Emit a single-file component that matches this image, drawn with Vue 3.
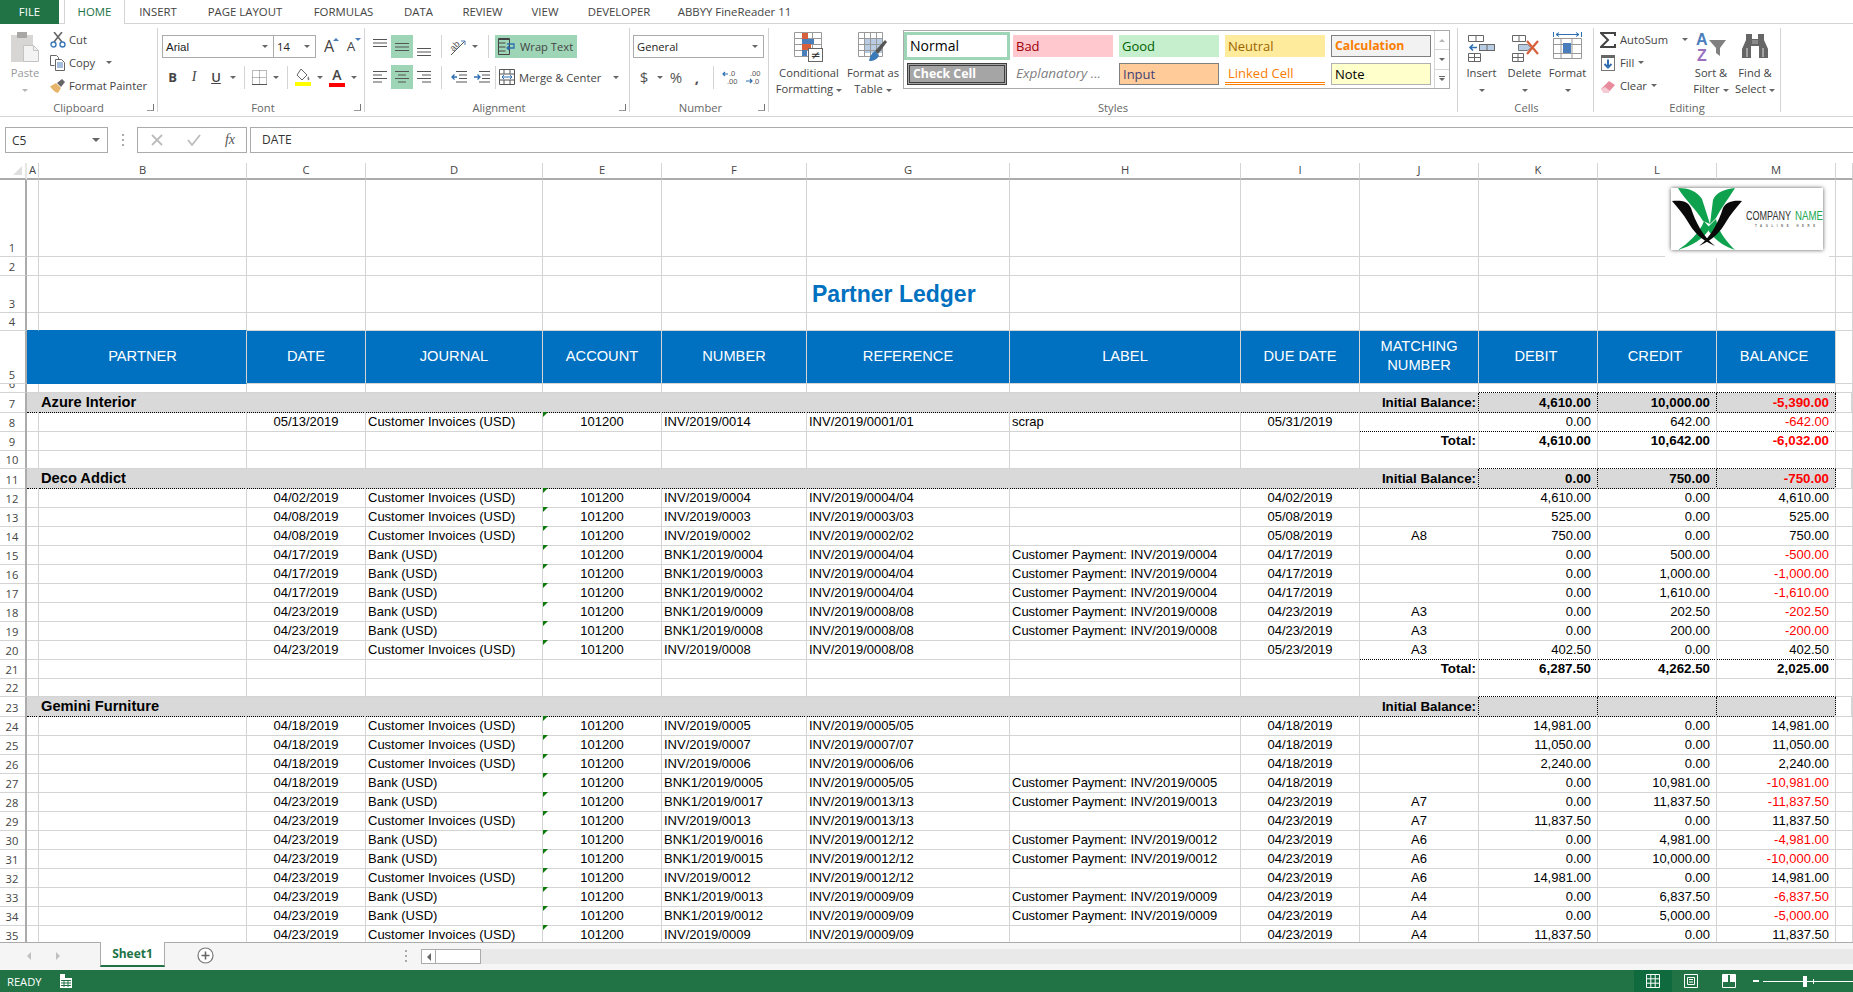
<template>
  <div class="excel">
    <!-- tabs -->
    <div class="tabs">
      <div class="file">FILE</div>
      <div class="home">HOME</div>
      <div v-for="t in tabs" :key="t.name" class="tab" :style="{ width: t.w + 'px' }">{{ t.name }}</div>
    </div>

    <!-- ribbon -->
    <div class="ribbon">
      <div class="group g-clip">
        <div class="body">
          <div class="big paste">
            <svg width="30" height="30" viewBox="0 0 30 30"><rect x="0" y="3" width="22" height="27" fill="#d8d5d5"/><rect x="6" y="0" width="10" height="6" fill="#a9a6a6"/><path d="M12.500 13.500h10l5 5v11h-15z" fill="#f4f3f3" stroke="#c5c2c2"/><path d="M22.500 13.500v5h5" fill="none" stroke="#c5c2c2"/></svg>
            <span class="gray">Paste</span>
            <i class="caret light"></i>
          </div>
          <div class="small">
            <div class="item">
              <svg width="16" height="16" viewBox="0 0 16 16"><path d="M4 10L12 0M12 10L4 0" stroke="#666" stroke-width="1.600"/><circle cx="3.500" cy="12.500" r="2.500" fill="none" stroke="#3b7ab9" stroke-width="1.400"/><circle cx="12.500" cy="12.500" r="2.500" fill="none" stroke="#3b7ab9" stroke-width="1.400"/></svg>
              <span>Cut</span>
            </div>
            <div class="item">
              <svg width="16" height="16" viewBox="0 0 16 16"><path d="M.5.500h6l2 2v2M.5.500v10h4" fill="none" stroke="#666"/><path d="M5.500 4.500h6l3 3v8h-9z" fill="#fff" stroke="#666"/><path d="M7 8h6M7 10h6M7 12h6" stroke="#4a7ebb"/></svg>
              <span>Copy</span><i class="caret copy-caret"></i>
            </div>
            <div class="item">
              <svg width="16" height="16" viewBox="0 0 16 16"><path d="M0 8.500L6 5l5 5-3 5c-3-.5-5-3-8-6.500z" fill="#e6b56b"/><path d="M7 5l5-4 3 3-4 5z" fill="#666"/></svg>
              <span>Format Painter</span>
            </div>
          </div>
        </div>
        <div class="label">Clipboard<i class="launch"></i></div>
      </div>

      <div class="group g-font">
        <div class="body col">
          <div class="line1">
            <div class="select font-name"><span class="arial">Arial</span><i class="caret"></i></div>
            <div class="select font-size"><span>14</span><i class="caret"></i></div>
            <span class="grow">A<i class="up"></i></span>
            <span class="shrink">A<i class="down"></i></span>
          </div>
          <div class="line2">
            <span class="t w21 fb">B</span>
            <span class="t w22 fi">I</span>
            <span class="t w22 fu">U</span>
            <span class="t w12"><i class="caret"></i></span>
            <span class="t w10"><i class="sep"></i></span>
            <span class="t w21">
              <svg width="15" height="15" viewBox="0 0 15 15"><path d="M.5.500h14v14H.5zM7.500.500v14M.5 7.500h14" fill="none" stroke="#777" stroke-dasharray="1 1"/><path d="M0 14.500h15" stroke="#555"/></svg>
            </span>
            <span class="t w12"><i class="caret"></i></span>
            <span class="t w10"><i class="sep"></i></span>
            <span class="t w22">
              <svg width="18" height="18" viewBox="0 0 18 18"><path d="M7 1l6 6-5 5-5-5z" fill="#fff" stroke="#666"/><path d="M14 8c1 2 2 3 1 4s-2-1-1-4z" fill="#777"/><rect x="1" y="14" width="16" height="4" fill="#ffff00"/></svg>
            </span>
            <span class="t w12"><i class="caret"></i></span>
            <span class="t w22 fcolor">A</span>
            <span class="t w12"><i class="caret"></i></span>
          </div>
        </div>
        <div class="label">Font<i class="launch"></i></div>
      </div>

      <div class="group g-align">
        <div class="body col">
          <div class="line1">
            <span class="t w22">
              <svg width="14" height="18" viewBox="0 0 14 18"><path d="M0 1.500h14M0 5h14M0 8.500h14" stroke="#555"/></svg>
            </span>
            <span class="t w22 on">
              <svg width="14" height="18" viewBox="0 0 14 18"><path d="M0 5.500h14M0 9h14M0 12.500h14" stroke="#555"/></svg>
            </span>
            <span class="t w22">
              <svg width="14" height="18" viewBox="0 0 14 18"><path d="M0 10.500h14M0 14h14M0 17.500h14" stroke="#555"/></svg>
            </span>
            <span class="t w8"><i class="sep"></i></span>
            <span class="t w22">
              <svg width="18" height="18" viewBox="0 0 18 18"><text x="1" y="10" transform="rotate(-45 7 8)" font-size="9" font-family="Liberation Sans, sans-serif" fill="#555">ab</text><path d="M2 17L16 3" stroke="#555"/><path d="M12 3h4v4" fill="none" stroke="#4a7ebb"/></svg>
            </span>
            <span class="t w12"><i class="caret"></i></span>
            <span class="t w14"><i class="sep"></i></span>
            <div class="wrap">
              <svg width="18" height="18" viewBox="0 0 18 18"><path d="M.5 1.500h11M.5 5h7M.5 9h7M.5 13h7" stroke="#444"/><path d="M.5.500h11v16H.5z" fill="none" stroke="#444"/><path d="M9 6h7v4h-7M11 8l-2 2 2 2" fill="none" stroke="#2f6fb0" stroke-width="1.300"/></svg>
              <span>Wrap Text</span>
            </div>
          </div>
          <div class="line2">
            <span class="t w22">
              <svg width="14" height="14" viewBox="0 0 14 14"><path d="M0 1.500h14M0 5h9M0 8.500h14M0 12h9" stroke="#555"/></svg>
            </span>
            <span class="t w22 on">
              <svg width="14" height="14" viewBox="0 0 14 14"><path d="M0 1.500h14M3 5h8M0 8.500h14M3 12h8" stroke="#555"/></svg>
            </span>
            <span class="t w22">
              <svg width="14" height="14" viewBox="0 0 14 14"><path d="M0 1.500h14M5 5h9M0 8.500h14M5 12h9" stroke="#555"/></svg>
            </span>
            <span class="t w8"><i class="sep"></i></span>
            <span class="t w23">
              <svg width="16" height="14" viewBox="0 0 16 14"><path d="M5 1.500h11M8 5h8M8 8.500h8M5 12h11" stroke="#555"/><path d="M6 7H1M3.500 4.500L1 7l2.500 2.500" fill="none" stroke="#2f6fb0" stroke-width="1.300"/></svg>
            </span>
            <span class="t w23">
              <svg width="16" height="14" viewBox="0 0 16 14"><path d="M5 1.500h11M8 5h8M8 8.500h8M5 12h11" stroke="#555"/><path d="M0 7h6M3.500 4.500L6 7 3.500 9.500" fill="none" stroke="#2f6fb0" stroke-width="1.300"/></svg>
            </span>
            <span class="t w4"><i class="sep"></i></span>
            <div class="merge">
              <svg width="16" height="16" viewBox="0 0 16 16"><path d="M.5.500h15v15H.5zM.5 5h15M.5 11h15M5 .5V5M11 .5V5M5 11v4.500M11 11v4.500" fill="none" stroke="#555"/><path d="M3 8h10M5 6l-2 2 2 2M11 6l2 2-2 2" fill="none" stroke="#2f6fb0"/></svg>
              <span>Merge &amp; Center</span>
              <i class="caret"></i>
            </div>
          </div>
        </div>
        <div class="label">Alignment<i class="launch"></i></div>
      </div>

      <div class="group g-num">
        <div class="body col">
          <div class="line1">
            <div class="select num-fmt"><span>General</span><i class="caret"></i></div>
          </div>
          <div class="line2 numline">
            <span class="t w22 sym">$</span>
            <span class="t w10"><i class="caret"></i></span>
            <span class="t w22 sym">%</span>
            <span class="t w20 sym comma">,</span>
            <span class="t w12"><i class="sep"></i></span>
            <span class="t w23">
              <svg width="18" height="16" viewBox="0 0 18 16"><text x="7" y="7" font-size="7.500" font-family="Liberation Sans, sans-serif" fill="#555">.0</text><text x="5" y="15" font-size="7.500" font-family="Liberation Sans, sans-serif" fill="#555">.00</text><path d="M6 5H1M3 3L1 5l2 2" fill="none" stroke="#2f6fb0" stroke-width="1.200"/></svg>
            </span>
            <span class="t w23">
              <svg width="18" height="16" viewBox="0 0 18 16"><text x="5" y="7" font-size="7.500" font-family="Liberation Sans, sans-serif" fill="#555">.00</text><text x="8" y="15" font-size="7.500" font-family="Liberation Sans, sans-serif" fill="#555">.0</text><path d="M1 12h6M5 10l2 2-2 2" fill="none" stroke="#2f6fb0" stroke-width="1.200"/></svg>
            </span>
          </div>
        </div>
        <div class="label">Number<i class="launch"></i></div>
      </div>

      <div class="group g-styles">
        <div class="body">
          <div class="big cond">
            <svg width="30" height="30" viewBox="0 0 30 30"><path d="M.5.500h27v24H.5zM9.500.5v24M18.500.5v24M.5 6.500h27M.5 12.500h27M.5 18.500h27" fill="#fff" stroke="#999"/><rect x="8" y="1" width="6" height="6" fill="#d6603c"/><rect x="8" y="7" width="12" height="5" fill="#4a7ebb"/><rect x="8" y="12" width="9" height="6" fill="#d6603c"/><rect x="8" y="18" width="5" height="6" fill="#4a7ebb"/><rect x="14.500" y="16.500" width="14" height="13" fill="#fff" stroke="#666"/><text x="21.500" y="27" text-anchor="middle" font-size="12" font-family="DejaVu Sans, sans-serif" fill="#333">≠</text></svg>
            <span>Conditional</span>
            <span>Formatting<i class="caret inl"></i></span>
          </div>
          <div class="big table">
            <svg width="30" height="30" viewBox="0 0 30 30"><rect x="1" y="1" width="24" height="24" fill="#fff"/><rect x="7" y="6" width="18" height="15" fill="#b8cce4"/><path d="M.5.500h24v24H.5zM6.500.5v24M12.500.5v24M18.500.5v24M.5 6.500h24M.5 12.500h24M.5 18.500h24" fill="none" stroke="#999"/><path d="M17 19L27 8l2 2-9 12z" fill="#555"/><path d="M11 29c1-6 4-9 6-10l4 4c-1 4-5 6-10 6z" fill="#3b7ab9"/></svg>
            <span>Format as</span>
            <span>Table<i class="caret inl"></i></span>
          </div>
          <div class="gallery">
            <div class="gal-grid">
              <div class="st s-normal">Normal</div>
              <div class="st s-bad">Bad</div>
              <div class="st s-good">Good</div>
              <div class="st s-neutral">Neutral</div>
              <div class="st s-calc">Calculation</div>
              <div class="st s-check">Check Cell</div>
              <div class="st s-expl">Explanatory ...</div>
              <div class="st s-input">Input</div>
              <div class="st s-linked">Linked Cell</div>
              <div class="st s-note">Note</div>
            </div>
            <div class="gal-scroll">
              <div class="gs"><i class="caret flip light"></i></div>
              <div class="gs"><i class="caret"></i></div>
              <div class="gs more"><i class="bar"></i><i class="caret"></i></div>
            </div>
          </div>
        </div>
        <div class="label">Styles</div>
      </div>

      <div class="group g-cells">
        <div class="body">
          <div class="big cellbtn">
            <svg width="27" height="30" viewBox="0 0 27 30"><path d="M.5 3.500h15v6H.5zM8 3.500v6M.5 21.500h12v8H.5zM.5 25.500h12M6.500 21.500v8" fill="none" stroke="#666"/><rect x="11.500" y="12.500" width="15" height="6" fill="#b8cce4" stroke="#666"/><path d="M19 12.500v6" stroke="#666"/><path d="M9 15.500H2M5 12.500l-3 3 3 3" fill="none" stroke="#2f6fb0" stroke-width="1.600"/></svg>
            <span>Insert</span>
            <i class="caret low"></i>
          </div>
          <div class="big cellbtn">
            <svg width="30" height="30" viewBox="0 0 30 30"><path d="M2.500 3.500h13v6h-13zM9 3.500v6M2.500 21.500h11v8h-11zM2.500 25.500h11M8 21.500v8" fill="none" stroke="#666"/><path d="M8.500 12.500h9l4 3-4 3h-9z" fill="#b8cce4" stroke="#777"/><path d="M17 9l11 13M28 9L17 22" stroke="#d6603c" stroke-width="2.200"/></svg>
            <span>Delete</span>
            <i class="caret low"></i>
          </div>
          <div class="big cellbtn">
            <svg width="29" height="30" viewBox="0 0 29 30"><path d="M.5 0v5M28.500 0v5M3 2.500h23M6 .5L3 2.500l3 2M23 .5l3 2-3 2" fill="none" stroke="#2f6fb0"/><path d="M.5 6.500h28v20H.5zM8 6.500v20M19 6.500v20M.5 12.500h28M.5 21.500h28" fill="#fff" stroke="#999"/><rect x="10" y="11" width="8" height="10" fill="#4a7ebb"/></svg>
            <span>Format</span>
            <i class="caret low"></i>
          </div>
        </div>
        <div class="label">Cells</div>
      </div>

      <div class="group g-edit">
        <div class="body">
          <div class="small edit-small">
            <div class="item">
              <svg width="16" height="16" viewBox="0 0 16 16"><path d="M15 4V1H1l7 7-7 7h14v-3" fill="none" stroke="#444" stroke-width="2"/></svg>
              <span>AutoSum</span><i class="caret sum-caret"></i>
            </div>
            <div class="item">
              <svg width="16" height="16" viewBox="0 0 16 16"><rect x="1.500" y=".5" width="13" height="15" fill="#fff" stroke="#777"/><rect x="1" y="0" width="14" height="3" fill="#666"/><path d="M8 4.500v8M4.500 9L8 12.500 11.500 9" fill="none" stroke="#2f6fb0" stroke-width="2"/></svg>
              <span>Fill</span><i class="caret fill-caret"></i>
            </div>
            <div class="item">
              <svg width="16" height="16" viewBox="0 0 16 16"><path d="M1 11l8-8 6 4-7 8H4z" fill="#e78b9d"/><path d="M1 11l3 4h4l2-2-5-4z" fill="#f6ccd4"/></svg>
              <span>Clear</span><i class="caret fill-caret"></i>
            </div>
          </div>
          <div class="big editbtn">
            <svg width="30" height="30" viewBox="0 0 30 30"><text x="0" y="13" font-size="16" font-weight="700" font-family="Liberation Sans, sans-serif" fill="#4a7ebb">A</text><text x="1" y="29" font-size="16" font-weight="700" font-family="Liberation Sans, sans-serif" fill="#9b6fc0">Z</text><path d="M13 8h17l-6 8v8l-4-3v-5z" fill="#808080"/></svg>
            <span>Sort &amp;</span>
            <span>Filter<i class="caret inl"></i></span>
          </div>
          <div class="big editbtn">
            <svg width="28" height="30" viewBox="0 0 28 30"><path d="M5 2h6v5h6V2h6v6l4 9v9H18V14h-8v12H1v-9l4-9z" fill="#666"/><path d="M11 8h6v4h-6z" fill="#8a8a8a"/><path d="M6 16v9M22 16v9" stroke="#fff" stroke-width=".8"/></svg>
            <span>Find &amp;</span>
            <span>Select<i class="caret inl"></i></span>
          </div>
        </div>
        <div class="label">Editing</div>
      </div>
    </div>

    <!-- formula bar -->
    <div class="fbar">
      <div class="namebox"><span>C5</span><i class="caret big-caret"></i></div>
      <div class="dots"><i></i><i></i><i></i></div>
      <div class="fbtns">
        <svg width="12" height="12" viewBox="0 0 12 12"><path d="M1 1l10 10M11 1L1 11" stroke="#bcbcbc" stroke-width="1.800"/></svg>
        <svg width="14" height="12" viewBox="0 0 14 12"><path d="M1 6l4 5 8-10" fill="none" stroke="#bcbcbc" stroke-width="1.800"/></svg>
        <span class="fx">fx</span>
      </div>
      <div class="finput">DATE</div>
    </div>

    <!-- sheet -->
    <div class="sheet">
      <div class="row colheads">
        <div class="corner"><i></i></div>
        <div v-for="c in letters" :key="c" class="colhead">{{ c }}</div>
        <div class="colhead"></div>
      </div>
      <div
        v-for="r in rows"
        :key="r.n"
        class="row"
        :class="[r.type, 'r' + r.n]"
        :style="{ height: r.h + 'px' }"
      >
        <div class="rowhead"><span>{{ r.n }}</span></div>
        <div
          v-for="(v, i) in r.cells"
          :key="i"
          class="cell"
          :class="cellClass(r, v, i)"
        >{{ v }}</div>
      </div>

      <div class="logo-halo">
        <div class="logo">
          <svg width="152" height="62" viewBox="0 0 152 62">
            <path d="M7 0C17 0 26 3 31 11L39 36L32 33C26 22 14 12 7 0Z" fill="#0fa24e"/>
            <path d="M64 0C54 1 45 4 42 12L39 36L45 30C50 20 58 10 64 0Z" fill="#0fa24e"/>
            <path d="M33 33C29 45 16 56 7 62C20 58 33 51 39 40Z" fill="#0fa24e"/>
            <path d="M45 31C47 44 57 55 64 62C52 58 41 50 36 40Z" fill="#0fa24e"/>
            <path d="M1 13C10 12 17 13 20 20C24 33 32 49 44 58C30 52 22 43 17 34C13 27 7 20 1 13Z" fill="#0a0a0a"/>
            <path d="M71 13C62 12 55 14 52 20C48 33 40 49 28 58C42 52 50 43 55 34C59 27 65 20 71 13Z" fill="#0a0a0a"/>
            <text x="75" y="32" font-size="13.500" font-family="Liberation Sans, sans-serif" textLength="45" lengthAdjust="spacingAndGlyphs" fill="#333">COMPANY</text>
            <text x="124" y="32" font-size="13.500" font-family="Liberation Sans, sans-serif" textLength="28" lengthAdjust="spacingAndGlyphs" fill="#22a84f">NAME</text>
            <text x="84" y="39" font-size="2.800" font-weight="700" font-family="Liberation Sans, sans-serif" textLength="60" fill="#666">TAGLINE HERE</text>
          </svg>
        </div>
      </div>
    </div>

    <!-- sheet tabs -->
    <div class="sheetbar">
      <div class="nav"><i class="tri left"></i><i class="tri right"></i></div>
      <div class="sheettab">Sheet1</div>
      <div class="plus">
        <svg width="17" height="17" viewBox="0 0 17 17"><circle cx="8.500" cy="8.500" r="7.500" fill="#fff" stroke="#777" stroke-width="1.200"/><path d="M8.500 4.500v8M4.500 8.500h8" stroke="#666" stroke-width="1.600"/></svg>
      </div>
      <div class="dots bar-dots"><i></i><i></i><i></i></div>
      <div class="track">
        <div class="arrow"><i class="tri left dark"></i></div>
        <div class="thumb"></div>
      </div>
    </div>

    <!-- status -->
    <div class="status">
      <span class="ready">READY</span>
      <svg class="macro" width="12" height="14" viewBox="0 0 12 14"><rect x="0" y="0" width="5" height="4" fill="#fff"/><rect x="0" y="4" width="12" height="10" fill="#fff"/><path d="M1 6.500h10M1 9h10M1 11.500h10M4 6v7M8 6v7" stroke="#217346"/></svg>
      <div class="views">
        <div class="view active">
          <svg width="14" height="14" viewBox="0 0 14 14"><path d="M.5.500h13v13H.5zM.5 4.800h13M.5 9.200h13M4.800.5v13M9.200.5v13" fill="none" stroke="#fff"/></svg>
        </div>
        <div class="view">
          <svg width="14" height="14" viewBox="0 0 14 14"><path d="M.5.500h13v13H.5z" fill="none" stroke="#fff"/><path d="M3.500 3.500h7v7h-7zM5 5.500h4M5 8h4" fill="none" stroke="#fff"/></svg>
        </div>
        <div class="view">
          <svg width="14" height="14" viewBox="0 0 14 14"><path d="M.5.500h13v13H.5z" fill="none" stroke="#fff"/><path d="M1 1h5v7H1zM8 1h5v7H8z" fill="#fff"/></svg>
        </div>
      </div>
      <i class="minus"></i>
      <div class="slider"><i class="knob"></i><i class="tick"></i></div>
    </div>
  </div>
</template>

<script setup>
const tabs = [
  { name: 'INSERT', w: 66 },
  { name: 'PAGE LAYOUT', w: 108 },
  { name: 'FORMULAS', w: 89 },
  { name: 'DATA', w: 61 },
  { name: 'REVIEW', w: 67 },
  { name: 'VIEW', w: 58 },
  { name: 'DEVELOPER', w: 90 },
  { name: 'ABBYY FineReader 11', w: 141 },
]

const letters = ['A', 'B', 'C', 'D', 'E', 'F', 'G', 'H', 'I', 'J', 'K', 'L', 'M']

const CI = 'Customer Invoices (USD)'
const BK = 'Bank (USD)'
const pay = (n) => 'Customer Payment: INV/2019/' + n

const blank = (h) => ({ type: 'blank', h, cells: Array(14).fill('') })
const title = () => {
  const cells = Array(14).fill('')
  cells[6] = 'Partner Ledger'
  return { type: 'title', h: 36, cells }
}
const head = () => ({
  type: 'head',
  h: 53,
  cells: ['', 'PARTNER', 'DATE', 'JOURNAL', 'ACCOUNT', 'NUMBER', 'REFERENCE', 'LABEL', 'DUE DATE', 'MATCHING NUMBER', 'DEBIT', 'CREDIT', 'BALANCE', ''],
})
const group = (name, d, c, b) => ({
  type: 'group',
  h: 19,
  cells: ['', name, '', '', '', '', '', '', '', 'Initial Balance:', d, c, b, ''],
})
const total = (d, c, b) => ({
  type: 'total',
  h: 19,
  cells: ['', '', '', '', '', '', '', '', '', 'Total:', d, c, b, ''],
})
const line = (date, journal, num, ref, label, due, match, d, c, b) => ({
  type: 'line',
  h: 19,
  cells: ['', '', date, journal, '101200', num, ref, label, due, match, d, c, b, ''],
})

const list = [
  blank(77),
  blank(19),
  title(),
  blank(19),
  head(),
  blank(9),
  group('Azure Interior', '4,610.00', '10,000.00', '-5,390.00'),
  line('05/13/2019', CI, 'INV/2019/0014', 'INV/2019/0001/01', 'scrap', '05/31/2019', '', '0.00', '642.00', '-642.00'),
  total('4,610.00', '10,642.00', '-6,032.00'),
  blank(19),
  group('Deco Addict', '0.00', '750.00', '-750.00'),
  line('04/02/2019', CI, 'INV/2019/0004', 'INV/2019/0004/04', '', '04/02/2019', '', '4,610.00', '0.00', '4,610.00'),
  line('04/08/2019', CI, 'INV/2019/0003', 'INV/2019/0003/03', '', '05/08/2019', '', '525.00', '0.00', '525.00'),
  line('04/08/2019', CI, 'INV/2019/0002', 'INV/2019/0002/02', '', '05/08/2019', 'A8', '750.00', '0.00', '750.00'),
  line('04/17/2019', BK, 'BNK1/2019/0004', 'INV/2019/0004/04', pay('0004'), '04/17/2019', '', '0.00', '500.00', '-500.00'),
  line('04/17/2019', BK, 'BNK1/2019/0003', 'INV/2019/0004/04', pay('0004'), '04/17/2019', '', '0.00', '1,000.00', '-1,000.00'),
  line('04/17/2019', BK, 'BNK1/2019/0002', 'INV/2019/0004/04', pay('0004'), '04/17/2019', '', '0.00', '1,610.00', '-1,610.00'),
  line('04/23/2019', BK, 'BNK1/2019/0009', 'INV/2019/0008/08', pay('0008'), '04/23/2019', 'A3', '0.00', '202.50', '-202.50'),
  line('04/23/2019', BK, 'BNK1/2019/0008', 'INV/2019/0008/08', pay('0008'), '04/23/2019', 'A3', '0.00', '200.00', '-200.00'),
  line('04/23/2019', CI, 'INV/2019/0008', 'INV/2019/0008/08', '', '05/23/2019', 'A3', '402.50', '0.00', '402.50'),
  total('6,287.50', '4,262.50', '2,025.00'),
  blank(19),
  group('Gemini Furniture', '', '', ''),
  line('04/18/2019', CI, 'INV/2019/0005', 'INV/2019/0005/05', '', '04/18/2019', '', '14,981.00', '0.00', '14,981.00'),
  line('04/18/2019', CI, 'INV/2019/0007', 'INV/2019/0007/07', '', '04/18/2019', '', '11,050.00', '0.00', '11,050.00'),
  line('04/18/2019', CI, 'INV/2019/0006', 'INV/2019/0006/06', '', '04/18/2019', '', '2,240.00', '0.00', '2,240.00'),
  line('04/18/2019', BK, 'BNK1/2019/0005', 'INV/2019/0005/05', pay('0005'), '04/18/2019', '', '0.00', '10,981.00', '-10,981.00'),
  line('04/23/2019', BK, 'BNK1/2019/0017', 'INV/2019/0013/13', pay('0013'), '04/23/2019', 'A7', '0.00', '11,837.50', '-11,837.50'),
  line('04/23/2019', CI, 'INV/2019/0013', 'INV/2019/0013/13', '', '04/23/2019', 'A7', '11,837.50', '0.00', '11,837.50'),
  line('04/23/2019', BK, 'BNK1/2019/0016', 'INV/2019/0012/12', pay('0012'), '04/23/2019', 'A6', '0.00', '4,981.00', '-4,981.00'),
  line('04/23/2019', BK, 'BNK1/2019/0015', 'INV/2019/0012/12', pay('0012'), '04/23/2019', 'A6', '0.00', '10,000.00', '-10,000.00'),
  line('04/23/2019', CI, 'INV/2019/0012', 'INV/2019/0012/12', '', '04/23/2019', 'A6', '14,981.00', '0.00', '14,981.00'),
  line('04/23/2019', BK, 'BNK1/2019/0013', 'INV/2019/0009/09', pay('0009'), '04/23/2019', 'A4', '0.00', '6,837.50', '-6,837.50'),
  line('04/23/2019', BK, 'BNK1/2019/0012', 'INV/2019/0009/09', pay('0009'), '04/23/2019', 'A4', '0.00', '5,000.00', '-5,000.00'),
  line('04/23/2019', CI, 'INV/2019/0009', 'INV/2019/0009/09', '', '04/23/2019', 'A4', '11,837.50', '0.00', '11,837.50'),
]

// row numbers and what comes next (dotted lines depend on it)
const rows = list.map((r, i) => ({
  ...r,
  n: i + 1,
  next: list[i + 1] ? list[i + 1].type : '',
}))

const cellClass = (r, v, i) => {
  const out = ['c' + i]
  if (v.startsWith('-')) out.push('neg')
  if (r.type === 'line' && i === 4) out.push('flag')
  if (r.next === 'total' && i >= 9 && i <= 12) out.push('dot-b')
  if (r.next === 'group' && i >= 10 && i <= 12) out.push('dot-b')
  return out
}
</script>

<style scoped>
.excel {
  width: 1853px;
  height: 992px;
  display: flex;
  flex-direction: column;
  overflow: hidden;
  background: #fff;
  color: #444;
  font-family: "Open Sans", "Noto Sans", sans-serif;
  font-size: 11.2px;
}

i {
  display: block;
  font-style: normal;
}

/* tabs */
.tabs {
  height: 24px;
  flex: none;
  display: flex;
  box-sizing: border-box;
  border-bottom: 1px solid #d4d4d4;
  font-size: 11.4px;
}

.file {
  width: 59px;
  height: 24px;
  background: #217346;
  color: #fff;
  text-align: center;
  line-height: 23px;
}

.home {
  margin-left: 5px;
  width: 61px;
  height: 24px;
  box-sizing: border-box;
  background: #fff;
  border: 1px solid #d4d4d4;
  border-bottom: none;
  border-top: none;
  color: #217346;
  text-align: center;
  line-height: 23px;
}

.tab {
  text-align: center;
  line-height: 23px;
  white-space: nowrap;
}

/* ribbon */
.ribbon {
  height: 93px;
  flex: none;
  box-sizing: border-box;
  display: flex;
  padding-top: 4px;
  border-bottom: 1px solid #d4d4d4;
}

.group {
  height: 84px;
  box-sizing: border-box;
  border-right: 1px solid #d4d4d4;
  display: flex;
  flex-direction: column;
  flex: none;
}

.g-clip { width: 158px; }
.g-font { width: 207px; padding-left: 4px; }
.g-align { width: 265px; padding-left: 4px; }
.g-num { width: 139px; padding-left: 3px; }
.g-styles { width: 689px; }
.g-cells { width: 136px; padding-left: 2px; }
.g-edit { width: 187px; }

.body {
  height: 73px;
  display: flex;
}

.col {
  flex-direction: column;
  padding-top: 7px;
  box-sizing: border-box;
}

.label {
  height: 11px;
  line-height: 13px;
  position: relative;
  text-align: center;
  color: #666;
}

.launch {
  position: absolute;
  right: 3px;
  top: 3px;
  width: 6px;
  height: 6px;
  border-left: 1px solid #999;
  border-bottom: 1px solid #777;
  transform: rotate(-90deg);
}

.line1 {
  height: 23px;
  display: flex;
  align-items: center;
}

.line2 {
  margin-top: 7px;
  height: 24px;
  display: flex;
  align-items: center;
}

.t {
  height: 100%;
  display: flex;
  align-items: center;
  justify-content: center;
  flex: none;
}

.w4 { width: 4px; }
.w8 { width: 8px; margin: 0 2px; }
.w10 { width: 10px; }
.w12 { width: 12px; }
.w14 { width: 14px; }
.w20 { width: 20px; }
.w21 { width: 21px; }
.w22 { width: 22px; }
.w23 { width: 23px; }

.on { background: #9fd5b7; }

.sep {
  width: 1px;
  height: 23px;
  background: #d4d4d4;
}

.caret {
  width: 0;
  height: 0;
  border-left: 3px solid transparent;
  border-right: 3px solid transparent;
  border-top: 3px solid #666;
}

.caret.light { border-top-color: #b5b5b5; }
.caret.flip { border-top: none; border-bottom: 3px solid #b5b5b5; }
.caret.inl { display: inline-block; vertical-align: middle; margin-left: 3px; }
.caret.low { margin-top: 8px; }

/* large buttons */
.big {
  display: flex;
  flex-direction: column;
  align-items: center;
  padding-top: 4px;
  box-sizing: border-box;
  line-height: 16px;
  white-space: nowrap;
}

.big svg {
  flex: none;
  margin-bottom: 3px;
}

.paste { width: 50px; }
.paste svg { margin-left: 2px; }
.paste .caret { margin-top: 8px; }
.gray { color: #999; }

.small {
  display: flex;
  flex-direction: column;
}

.item {
  height: 23px;
  display: flex;
  align-items: center;
  gap: 4px;
  white-space: nowrap;
}

.g-clip .item { gap: 3px; }

.copy-caret { margin-left: 8px; }

/* font */
.select {
  height: 23px;
  box-sizing: border-box;
  border: 1px solid #ababab;
  display: flex;
  align-items: center;
  justify-content: space-between;
  padding: 0 5px 0 3px;
  color: #222;
  flex: none;
}

.font-name { width: 112px; }
.font-size { width: 43px; margin-left: -1px; }
.num-fmt { width: 131px; }

.arial {
  font-family: "Liberation Sans", sans-serif;
  font-size: 11.5px;
}

.grow, .shrink {
  position: relative;
  width: 22px;
  text-align: center;
  font-size: 16px;
  line-height: 23px;
}

.grow { margin-left: 2px; }
.shrink { font-size: 13.5px; }

.up, .down {
  position: absolute;
  top: 3px;
  right: 1px;
  width: 0;
  height: 0;
  border-left: 3px solid transparent;
  border-right: 3px solid transparent;
}

.up { border-bottom: 3px solid #4a7ebb; }
.down { border-top: 3px solid #4a7ebb; }

.fb, .fi, .fu, .fcolor {
  font-size: 13px;
  color: #444;
}

.fb { font-weight: 700; }
.fi { font-family: "Liberation Serif", serif; font-style: italic; font-size: 14px; }
.fu { text-decoration: underline; font-weight: 600; }

.fcolor {
  font-weight: 600;
  font-size: 14px;
  line-height: 14px;
  flex-direction: column;
}

.fcolor::after {
  content: "";
  width: 16px;
  height: 4px;
  background: #ff0000;
  margin-top: 1px;
}

/* alignment */
.wrap {
  margin-left: 0;
  width: 82px;
  height: 23px;
  background: #9fd5b7;
  display: flex;
  align-items: center;
  gap: 4px;
  padding-left: 3px;
  box-sizing: border-box;
  flex: none;
}

.merge {
  display: flex;
  align-items: center;
  margin-left: 2px;
  white-space: nowrap;
}

.merge span { margin-left: 4px; }
.merge .caret { margin-left: 12px; }

/* number */
.numline { padding-left: 0; }

.sym {
  font-size: 15px;
  color: #555;
}

.comma { font-weight: 700; }

/* styles */
.cond { width: 80px; }
.table { width: 48px; }

.gallery {
  margin-left: 6px;
  margin-top: 2px;
  width: 547px;
  height: 59px;
  box-sizing: border-box;
  border: 1px solid #ababab;
  display: flex;
}

.gal-grid {
  width: 531px;
  padding: 4px 0 0 3px;
  box-sizing: border-box;
  display: grid;
  grid-template-columns: repeat(5, 100px);
  grid-auto-rows: 22px;
  gap: 6px;
}

.st {
  box-sizing: border-box;
  font-size: 13px;
  line-height: 20px;
  padding-left: 3px;
  white-space: nowrap;
  overflow: hidden;
}

.s-normal { outline: 3px solid #9fd5b7; color: #000; font-size: 14px; line-height: 21px; }
.s-bad { background: #ffc7ce; color: #9c0006; padding-top: 1px; }
.s-good { background: #c6efce; color: #006100; padding-top: 1px; }
.s-neutral { background: #ffeb9c; color: #9c6500; padding-top: 1px; }
.s-calc { background: #f2f2f2; color: #fa7d00; font-weight: 700; font-size: 12.3px; border: 1px solid #7f7f7f; }
.s-check { background: #a5a5a5; color: #fff; font-weight: 700; font-size: 12.3px; border: 3px double #3f3f3f; line-height: 16px; }
.s-expl { color: #7f7f7f; font-style: italic; font-size: 13.5px; }
.s-input { background: #ffcc99; color: #3f3f76; border: 1px solid #7f7f7f; }
.s-linked { color: #fa7d00; border-bottom: 3px double #ff8001; }
.s-note { background: #ffffcc; color: #000; border: 1px solid #b2b2b2; }

.gal-scroll {
  width: 14px;
  margin-left: auto;
  display: flex;
  flex-direction: column;
  border-left: 1px solid #d4d4d4;
}

.gs {
  flex: 1;
  display: flex;
  flex-direction: column;
  align-items: center;
  justify-content: center;
  gap: 1px;
  border-bottom: 1px solid #d4d4d4;
}

.gs:last-child { border-bottom: none; }

.bar {
  width: 6px;
  height: 1px;
  background: #666;
}

/* cells, editing */
.cellbtn {
  width: 43px;
}

.edit-small {
  width: 95px;
  padding-left: 6px;
  box-sizing: border-box;
}

.sum-caret { margin-left: 10px; }
.fill-caret { margin-left: 0; }

.editbtn { width: 44px; }

/* formula bar */
.fbar {
  height: 46px;
  flex: none;
  box-sizing: border-box;
  padding: 10px 0 10px 5px;
  display: flex;
  font-size: 12px;
}

.namebox {
  width: 103px;
  height: 26px;
  box-sizing: border-box;
  border: 1px solid #ababab;
  display: flex;
  align-items: center;
  justify-content: space-between;
  padding: 0 7px 0 6px;
  color: #333;
}

.big-caret {
  border-left-width: 4px;
  border-right-width: 4px;
  border-top-width: 4px;
}

.dots {
  display: flex;
  flex-direction: column;
  gap: 3px;
  justify-content: center;
  width: 29px;
  align-items: center;
}

.dots i {
  width: 2px;
  height: 2px;
  background: #aaa;
}

.fbtns {
  width: 110px;
  height: 26px;
  box-sizing: border-box;
  border: 1px solid #ababab;
  display: flex;
  align-items: center;
  justify-content: space-between;
  padding: 0 11px 0 13px;
}

.fx {
  font-family: "Liberation Serif", serif;
  font-style: italic;
  font-size: 14px;
  color: #555;
}

.finput {
  flex: 1;
  height: 26px;
  margin-left: 3px;
  box-sizing: border-box;
  border: 1px solid #ababab;
  border-right: none;
  line-height: 24px;
  padding-left: 11px;
  color: #333;
}

/* sheet */
.sheet {
  flex: 1;
  min-height: 0;
  overflow: hidden;
  position: relative;
  font-family: "Liberation Sans", sans-serif;
  font-size: 13px;
  color: #000;
}

.row {
  display: grid;
  grid-template-columns: 27px 12px 208px 119px 177px 119px 145px 203px 231px 119px 119px 119px 119px 119px 1fr;
}

.colheads {
  height: 17px;
  font-family: "Open Sans", sans-serif;
  font-size: 11.2px;
  color: #444;
}

.corner {
  box-sizing: border-box;
  border-right: 2px solid #e6e6e6;
  border-bottom: 2px solid #ababab;
  position: relative;
}

.corner i {
  position: absolute;
  right: 3px;
  bottom: 3px;
  width: 0;
  height: 0;
  border-left: 9px solid transparent;
  border-bottom: 9px solid #dfdfdf;
}

.colhead {
  box-sizing: border-box;
  border-right: 1px solid #d4d4d4;
  border-bottom: 2px solid #ababab;
  text-align: center;
  line-height: 14px;
}

.rowhead {
  box-sizing: border-box;
  border-right: 2px solid #ababab;
  border-bottom: 1px solid #d4d4d4;
  display: flex;
  align-items: flex-end;
  justify-content: center;
  overflow: hidden;
  font-family: "Open Sans", sans-serif;
  font-size: 11.2px;
  line-height: 17px;
  color: #444;
  padding-right: 1px;
}

.cell {
  box-sizing: border-box;
  position: relative;
  border-right: 1px solid #d4d4d4;
  border-bottom: 1px solid #d4d4d4;
  white-space: nowrap;
  line-height: 19px;
  padding: 0 2px;
}

.c2, .c4, .c8, .c9 { text-align: center; }
.c10, .c11, .c12 { text-align: right; padding-right: 6px; }
.neg { color: #ff0000; }

.dot-b { border-bottom: 1px dotted #000; }

.flag::before {
  content: "";
  position: absolute;
  left: 0;
  top: 0;
  width: 0;
  height: 0;
  border-top: 5px solid #0b7a0b;
  border-right: 5px solid transparent;
}

/* title row */
.title .c6 {
  color: #0070c0;
  font-size: 23px;
  font-weight: 700;
  line-height: 36px;
  padding-left: 5px;
}

/* header row */
.r4 .c0, .r4 .c1 { border-bottom-color: #0070c0; }

.head .cell:not(.c13) {
  background: #0070c0;
  color: #fff;
  font-size: 14.67px;
  line-height: 19px;
  display: flex;
  align-items: center;
  justify-content: center;
  text-align: center;
  white-space: normal;
  padding-bottom: 2px;
}

.head .c0 { border-right-color: #0070c0; }
.head .c0, .head .c1 { border-bottom-color: #0070c0; }
.head .c9 { padding-left: 20px; padding-right: 20px; }

/* partner row */
.group .cell:not(.c13) {
  background: #d9d9d9;
  border-right-color: #d9d9d9;
  border-bottom: 1px dotted #000;
  font-weight: 700;
  font-size: 13.33px;
}

.group .c1 { font-size: 14.67px !important; }
.group .c9 { text-align: right; }
.group .c9, .group .c10, .group .c11, .group .c12 { border-right: 1px dotted #000 !important; }

.total .c9 { text-align: right; }
.total .c9, .total .c10, .total .c11, .total .c12 { font-weight: 700; font-size: 13.33px; }

/* logo */
.logo-halo {
  position: absolute;
  left: 1665px;
  top: 17px;
  width: 164px;
  height: 78px;
  background: #fff;
  padding: 8px 0 0 6px;
  box-sizing: border-box;
}

.logo {
  width: 152px;
  height: 62px;
  background: #fff;
  box-shadow: 0 0 4px rgba(0, 0, 0, 0.65);
  overflow: hidden;
}

/* sheet bar */
.sheetbar {
  height: 28px;
  flex: none;
  box-sizing: border-box;
  background: #f5f5f5;
  border-top: 1px solid #ababab;
  display: flex;
}

.nav {
  width: 100px;
  height: 26px;
  display: flex;
  align-items: center;
  gap: 25px;
  padding-left: 27px;
  box-sizing: border-box;
}

.tri {
  width: 0;
  height: 0;
  border-top: 4px solid transparent;
  border-bottom: 4px solid transparent;
}

.tri.left { border-right: 4px solid #c0c0c0; }
.tri.right { border-left: 4px solid #c0c0c0; }
.tri.dark { border-right-color: #666; }

.sheettab {
  width: 65px;
  height: 25px;
  box-sizing: border-box;
  background: #fff;
  margin-top: -1px;
  border: 1px solid #ababab;
  border-top: none;
  border-bottom: 2px solid #217346;
  color: #217346;
  font-weight: 700;
  font-size: 12px;
  text-align: center;
  line-height: 23px;
}

.plus {
  margin-left: 32px;
  margin-top: 4px;
  height: 17px;
}

.bar-dots {
  margin-left: 187px;
  width: 10px;
  height: 26px;
}

.track {
  margin-left: 10px;
  margin-top: 6px;
  flex: 1;
  height: 15px;
  background: #e9e9e9;
  display: flex;
}

.arrow {
  width: 15px;
  box-sizing: border-box;
  background: #fff;
  border: 1px solid #ababab;
  display: flex;
  align-items: center;
  justify-content: center;
}

.thumb {
  width: 45px;
  box-sizing: border-box;
  background: #fff;
  border: 1px solid #ababab;
  border-left: none;
}

/* status */
.status {
  height: 22px;
  flex: none;
  background: #217346;
  color: #fff;
  display: flex;
  align-items: center;
}

.ready { margin-left: 7px; width: 53px; }

.macro { flex: none; }

.views {
  margin-left: 1562px;
  height: 22px;
  display: flex;
  flex: none;
}

.view {
  width: 38px;
  height: 22px;
  display: flex;
  align-items: center;
  justify-content: center;
}

.view.active { background: #0f6a3d; }

.minus {
  margin-left: 5px;
  width: 6px;
  height: 2px;
  background: #fff;
  flex: none;
}

.slider {
  margin-left: 4px;
  flex: 1;
  height: 1px;
  background: #fff;
  position: relative;
}

.knob {
  position: absolute;
  left: 40px;
  top: -5px;
  width: 4px;
  height: 11px;
  background: #fff;
}

.tick {
  position: absolute;
  left: 50px;
  top: -2px;
  width: 1px;
  height: 5px;
  background: #fff;
}
</style>
